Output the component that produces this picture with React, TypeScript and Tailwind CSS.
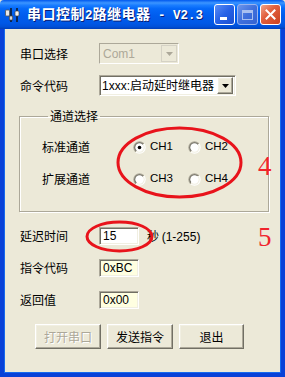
import React from 'react';

const cjk = { fontFamily: '"Noto Sans CJK SC", "Liberation Sans", sans-serif' };
const latin = { fontFamily: '"Liberation Sans", "Noto Sans CJK SC", sans-serif' };

const sunken =
  'border border-t-[#aca899] border-l-[#aca899] border-b-white border-r-white shadow-[inset_1px_1px_0_#716f64,inset_-1px_-1px_0_#f1efe2]';
const raised =
  'border border-t-white border-l-white border-b-[#716f64] border-r-[#716f64] shadow-[inset_-1px_-1px_0_#aca899,inset_1px_1px_0_#f1efe2]';

function Radio({ checked }: { checked?: boolean }) {
  return (
    <svg width="13" height="13" viewBox="0 0 13 13" className="shrink-0">
      <defs>
        <linearGradient id="ro" x1="0" y1="0" x2="1" y2="1">
          <stop offset="0.5" stopColor="#aca899" />
          <stop offset="0.5" stopColor="#ffffff" />
        </linearGradient>
        <linearGradient id="ri" x1="0" y1="0" x2="1" y2="1">
          <stop offset="0.5" stopColor="#716f64" />
          <stop offset="0.5" stopColor="#f1efe2" />
        </linearGradient>
      </defs>
      <circle cx="6.5" cy="6.5" r="6.2" fill="url(#ro)" />
      <circle cx="6.5" cy="6.5" r="5.2" fill="url(#ri)" />
      <circle cx="6.5" cy="6.5" r="4.2" fill="#ffffff" />
      {checked && <circle cx="6.5" cy="6.5" r="1.8" fill="#000000" />}
    </svg>
  );
}

function Choice({ label, checked }: { label: string; checked?: boolean }) {
  return (
    <div className="flex items-center w-[55px]">
      <Radio checked={checked} />
      <span className="ml-[4px] text-[11.5px] text-black" style={latin}>{label}</span>
    </div>
  );
}

function Field({ label, value, yellow }: { label: string; value: string; yellow?: boolean }) {
  return (
    <div className="flex items-center ml-[16px] h-[18px]">
      <span className="w-[79px] text-[12px] text-black leading-none" style={cjk}>{label}</span>
      <div className={`${sunken} w-[40px] h-[18px] flex items-center pl-[3px] ${yellow ? 'bg-[#ffffe1]' : 'bg-white'}`}>
        <span className="text-[12px] text-black leading-none" style={latin}>{value}</span>
      </div>
    </div>
  );
}

function TitleIcon() {
  return (
    <svg width="16" height="16" viewBox="0 0 16 16">
      <rect x="0.5" y="3" width="4" height="6" rx="1" fill="#e8e8e8" stroke="#555" strokeWidth="0.8" />
      <line x1="6" y1="1" x2="6" y2="15" stroke="#111" strokeWidth="1.4" />
      <line x1="12" y1="1" x2="12" y2="15" stroke="#111" strokeWidth="1.4" />
      <rect x="4.3" y="9" width="3.4" height="4" fill="#d8d8d8" stroke="#444" strokeWidth="0.7" />
      <rect x="10" y="4" width="4" height="5" rx="1" fill="#f2f2f2" stroke="#444" strokeWidth="0.7" />
    </svg>
  );
}

export default function App() {
  return (
    <div className="w-[285px] h-[377px] flex flex-col bg-[#ece9d8] overflow-hidden">
      {/* title bar */}
      <div className="h-[29px] shrink-0 flex items-center pl-[5px] pr-[4px] rounded-t-[4px] bg-[linear-gradient(to_bottom,#0058ee_0%,#3c95ff_10%,#1a7dff_18%,#0468f8_30%,#005ced_55%,#0058e6_80%,#0050d8_92%,#003fb8_100%)]">
        <TitleIcon />
        <div className="ml-[6px] flex items-baseline text-white font-bold [text-shadow:1px_1px_0_#0a1d74]">
          <span className="text-[14px] tracking-[0.5px]" style={{ fontFamily: '"Noto Sans CJK SC", sans-serif' }}>串口控制</span>
          <span className="text-[12.5px]" style={{ fontFamily: '"Liberation Mono", monospace' }}>2</span>
          <span className="text-[14px] tracking-[0.5px]" style={{ fontFamily: '"Noto Sans CJK SC", sans-serif' }}>路继电器</span>
          <span className="text-[12.5px] whitespace-pre" style={{ fontFamily: '"Liberation Mono", monospace' }}> - V2.3</span>
        </div>
        <div className="ml-auto flex gap-[2px]">
          <div className="w-[21px] h-[21px] rounded-[3px] border border-white bg-[linear-gradient(135deg,#5a8df5_0%,#2661e6_50%,#1a4fd0_100%)] flex items-end pl-[5px] pb-[4px]">
            <div className="w-[7px] h-[3px] bg-white" />
          </div>
          <div className="w-[21px] h-[21px] rounded-[3px] border border-[#9ab4ee] bg-[linear-gradient(135deg,#6b95ec_0%,#3f6fdc_50%,#3462d2_100%)] flex items-center justify-center">
            <div className="w-[11px] h-[10px] border border-[#a8bff0] border-t-[3px]" />
          </div>
          <div className="w-[21px] h-[21px] rounded-[3px] border border-white bg-[linear-gradient(135deg,#f0a58a_0%,#e2613f_40%,#c9401f_100%)] flex items-center justify-center">
            <svg width="11" height="11" viewBox="0 0 11 11">
              <path d="M1.5 1.5 L9.5 9.5 M9.5 1.5 L1.5 9.5" stroke="#fff" strokeWidth="2" strokeLinecap="square" />
            </svg>
          </div>
        </div>
      </div>

      {/* body */}
      <div className="relative flex-1 flex flex-col border-x-4 border-b-4 border-[#0841d8] shadow-[inset_1px_0_0_#166aee,inset_-1px_0_0_#166aee,inset_0_-1px_0_#166aee]">
        {/* 串口选择 */}
        <div className="flex items-center ml-[16px] mt-[14px] h-[21px]">
          <span className="w-[79px] text-[12px] text-black leading-none" style={cjk}>串口选择</span>
          <div className="w-[80px] h-[21px] border border-t-[#aca899] border-l-[#aca899] border-b-white border-r-white bg-[#ece9d8] flex items-center">
            <span className="flex-1 pl-[3px] text-[12px] text-[#aca899] leading-none" style={latin}>Com1</span>
            <div className="w-[16px] h-[17px] mr-[1px] border border-[#d5d2c5] bg-[#ece9d8] flex items-center justify-center">
              <svg width="7" height="4" viewBox="0 0 7 4"><path d="M0 0 H7 L3.5 4 Z" fill="#aca899" /></svg>
            </div>
          </div>
        </div>

        {/* 命令代码 */}
        <div className="flex items-center ml-[16px] mt-[11px] h-[21px]">
          <span className="w-[79px] text-[12px] text-black leading-none" style={cjk}>命令代码</span>
          <div className={`${sunken} w-[137px] h-[21px] bg-white flex items-center`}>
            <span className="flex-1 pl-[2px] text-[12px] text-black leading-none whitespace-nowrap">
              <span style={latin}>1xxx:</span>
              <span style={cjk}>启动延时继电器</span>
            </span>
            <div className={`${raised} w-[16px] h-[17px] mr-[2px] bg-[#ece9d8] flex items-center justify-center`}>
              <svg width="7" height="4" viewBox="0 0 7 4"><path d="M0 0 H7 L3.5 4 Z" fill="#000" /></svg>
            </div>
          </div>
        </div>

        {/* 通道选择 */}
        <fieldset className="ml-[15px] mt-[12px] w-[250px] h-[104px] border border-[#aca899] shadow-[1px_1px_0_#ffffff,inset_1px_1px_0_#ffffff] pl-[22px]">
          <legend className="ml-[6px] px-[2px] text-[12px] text-black leading-[16px]" style={cjk}>通道选择</legend>
          <div className="flex items-center mt-[15px] h-[16px]">
            <span className="w-[91px] text-[12px] text-black leading-none" style={cjk}>标准通道</span>
            <Choice label="CH1" checked />
            <Choice label="CH2" />
          </div>
          <div className="flex items-center mt-[16px] h-[16px]">
            <span className="w-[91px] text-[12px] text-black leading-none" style={cjk}>扩展通道</span>
            <Choice label="CH3" />
            <Choice label="CH4" />
          </div>
        </fieldset>

        {/* 延迟时间 */}
        <div className="flex items-center mt-[15px]">
          <Field label="延迟时间" value="15" />
          <span className="ml-[8px] text-[12px] text-black leading-none" style={cjk}>秒 <span style={latin}>(1-255)</span></span>
        </div>
        <div className="mt-[14px]"><Field label="指令代码" value="0xBC" yellow /></div>
        <div className="mt-[14px]"><Field label="返回值" value="0x00" yellow /></div>

        {/* buttons */}
        <div className="flex gap-[6px] ml-[31px] mt-[15px]">
          <div className={`${raised} w-[66px] h-[25px] bg-[#ece9d8] flex items-center justify-center text-[12px] text-[#aca899] [text-shadow:1px_1px_0_#ffffff]`} style={cjk}>打开串口</div>
          <div className={`${raised} w-[66px] h-[25px] bg-[#ece9d8] flex items-center justify-center text-[12px] text-black`} style={cjk}>发送指令</div>
          <div className={`${raised} w-[65px] h-[25px] bg-[#ece9d8] flex items-center justify-center text-[12px] text-black`} style={cjk}>退出</div>
        </div>

        {/* red annotations */}
        <svg className="absolute left-0 top-0 pointer-events-none" width="277" height="344" viewBox="0 0 277 344">
          <ellipse cx="175.5" cy="133.5" rx="61.5" ry="34.5" fill="none" stroke="#e8131b" strokeWidth="3" />
          <ellipse cx="115.5" cy="207.5" rx="32.5" ry="14.5" fill="none" stroke="#e8131b" strokeWidth="3" />
        </svg>
        <span className="absolute left-[254px] top-[124px] text-[27px] leading-none text-[#f0242c]" style={{ fontFamily: '"Liberation Serif", serif' }}>4</span>
        <span className="absolute left-[254px] top-[195px] text-[27px] leading-none text-[#f0242c]" style={{ fontFamily: '"Liberation Serif", serif' }}>5</span>
      </div>
    </div>
  );
}
